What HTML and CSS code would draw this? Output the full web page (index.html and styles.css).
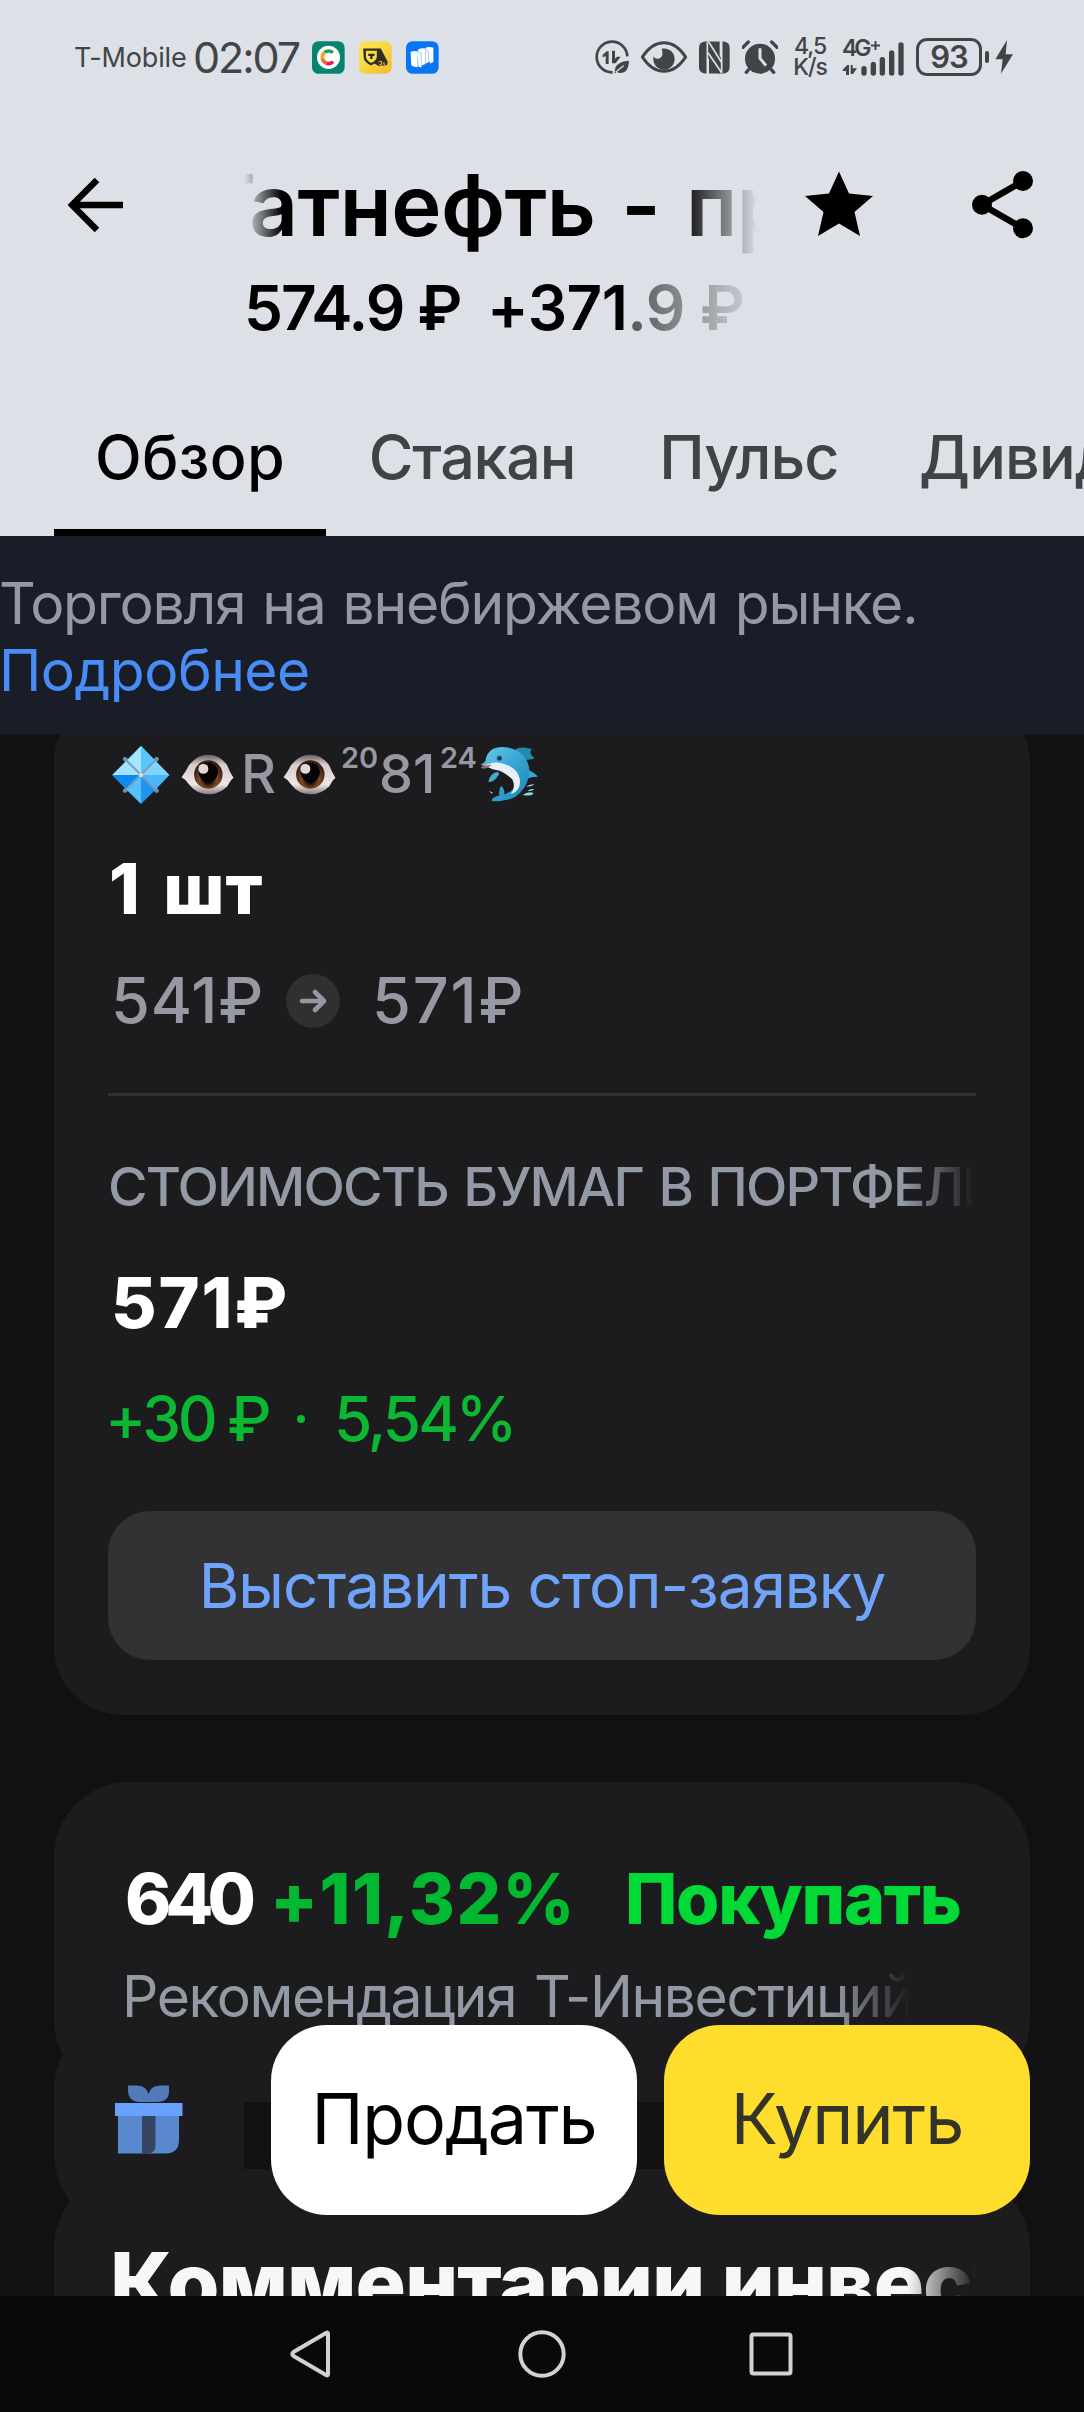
FILE: index.html
```
<!DOCTYPE html>
<html lang="ru">
<head>
<meta charset="utf-8">
<title>Татнефть - прив.</title>
<link rel="stylesheet" href="styles.css">
</head>
<body>
<header class="header">
  <div class="status">
    <span class="carrier">T-Mobile</span>
    <span class="clock">02:07</span>
    <svg class="app-icon" viewBox="36 30 100 99"><rect x="36" y="30" width="99" height="99" rx="20" fill="#078470"/><circle cx="86" cy="79" r="35" fill="#fff"/><g fill="none" stroke-width="11"><path d="M99 65A19 19 0 0 0 74 64" stroke="#1fa35c"/><path d="M74 64A19 19 0 0 0 68 83" stroke="#f0a52a"/><path d="M68 83A19 19 0 0 0 80 97" stroke="#e9742c"/><path d="M80 97A19 19 0 0 0 100 92" stroke="#d91e63"/></g></svg>
    <svg class="app-icon" viewBox="177 30 100 99"><defs><linearGradient id="gy" x1="0" x2="1" y1="0" y2="1"><stop offset=".3" stop-color="#fbe047"/><stop offset="1" stop-color="#f5b92c"/></linearGradient></defs><rect x="177" y="30" width="99" height="99" rx="20" fill="url(#gy)"/><path d="M190 52H243L264 92L262 102L238 106L224 98L214 104Q192 94 191 78Z" fill="#2f2d25"/><path d="M198 59H231V77Q230 89 214 96Q199 89 198 77Z" fill="#f7dc49"/><path d="M205 68H224V75H218V84H211V75H205Z" fill="#2f2d25"/><path d="M236 94Q242 88 246 92T239 102H248M253 94Q249 102 256 100" fill="none" stroke="#f6c637" stroke-width="3"/></svg>
    <svg class="app-icon" viewBox="319 30 100 99"><rect x="319" y="30" width="99" height="99" rx="20" fill="#0876f2"/><path d="M333 63Q342 58 355 61L354 109Q343 109 335 103ZM355 56Q365 50 377 52L378 99L366 104V110L356 107ZM378 50Q389 46 402 50V93L392 98L391 92L379 98Z" fill="#fff"/><path d="M355 61L365 66V104M377 53L386 59L388 93" fill="none" stroke="#a6cbfa" stroke-width="3"/></svg>
    <div class="status-right">
      <svg width="34" height="34" viewBox="45 28 102 102"><path d="M142 77A46 46 0 1 0 98 125" fill="none" stroke="#424548" stroke-width="8"/><path d="M86 100V62H80L68 72V80L77 76V100ZM96 60H105V84L111 78H122L107 98H96Z" fill="#424548"/><path d="M147 90Q110 92 105 115L104 129L110 123Q117 130 132 125Q146 118 147 90Z" fill="#424548"/><path d="M107 124L131 105" stroke="#dde0e7" stroke-width="4"/></svg>
      <svg class="eye-icon" width="46" height="32" viewBox="183 32 138 96"><path d="M187 80Q215 37 252 37T317 80Q289 123 252 123T187 80Z" fill="none" stroke="#424548" stroke-width="9"/><path d="M245 55A32 32 0 1 1 221 78Q226 89 239 84Q252 76 245 55Z" fill="#424548"/></svg>
      <svg class="nfc-icon" width="31" height="33" viewBox="357 31 93 98"><rect x="357" y="32" width="92" height="96" rx="18" fill="#424548"/><path d="M384 30V130M422 30V130" stroke="#dde0e7" stroke-width="6"/><path d="M381 32H390L425 84V128H416L381 76Z" fill="#424548"/><path d="M384 30L425 95M384 66L425 126" stroke="#dde0e7" stroke-width="5"/><path d="M382 34V128M425 32V126" stroke="#dde0e7" stroke-width="5"/></svg>
      <svg class="alarm-icon" width="36" height="34" viewBox="486 28 108 102"><circle cx="540" cy="84" r="45" fill="#424548"/><path d="M489 50L505 34M591 50L575 34" stroke="#424548" stroke-width="10" stroke-linecap="round"/><path d="M510 112L499 125M570 112L581 125" stroke="#424548" stroke-width="10" stroke-linecap="round"/><path d="M540 53V83L558 105" stroke="#dde0e7" stroke-width="9" fill="none"/></svg>
      <div class="speed"><span>4,5</span><span>K/s</span></div>
      <div class="signal">
        <div class="net">4G<svg class="plus" width="9" height="9" viewBox="0 0 9 9"><path d="M4.500 0V9M0 4.500H9" stroke="#424548" stroke-width="2"/></svg></div>
        <svg width="62" height="34" viewBox="66 25 186 102"><g stroke="#424548" stroke-width="16" stroke-linecap="round"><path d="M132 105V118M160 92V118M187 78V118M215 58V118M243 34V118"/></g><path d="M87 124V94H82L68 108V112H78V124ZM92 94H98V104H111L99 121H92Z" fill="#424548"/></svg>
      </div>
      <div class="battery">93</div>
      <span class="battery-tip"></span>
      <svg class="bolt" width="18" height="34" viewBox="526 26 54 102"><path d="M562 26L527 84H549L544 127L580 69H558Z" fill="#424548"/></svg>
    </div>
  </div>

  <div class="titlebar">
    <svg class="back" width="56" height="56" viewBox="68 177 56 56"><path d="M97 180L72 205L97 230M72 205H123" fill="none" stroke="#000" stroke-width="6.5"/></svg>
    <div class="heading">
      <h1 class="title"><span>Татнефть - прив.</span></h1>
      <div class="subtitle"><span>574.9 ₽</span><span>+371.9 ₽</span></div>
    </div>
    <svg class="star" width="68" height="66" viewBox="805 171 68 66"><path d="M839 171.500L849 193.500L873 196L854.500 212L860 236L839 223.500L818 236L823.500 212L805 196L829 193.500Z"/></svg>
    <svg class="share" width="62" height="68" viewBox="972 171 62 68"><path d="M1023 181L982 204.700L1023 228.500" fill="none" stroke="#000" stroke-width="6.500"/><circle cx="1023" cy="181" r="10"/><circle cx="982" cy="204.700" r="10"/><circle cx="1023" cy="228.300" r="10"/></svg>
  </div>

  <nav class="tabs">
    <a class="tab tab-overview active">Обзор</a>
    <a class="tab tab-book">Стакан</a>
    <a class="tab tab-pulse">Пульс</a>
    <a class="tab tab-div">Дивиденды</a>
  </nav>
</header>

<div class="notice"><p>Торговля на внебиржевом рынке.</p><a>Подробнее</a></div>

<main class="content">
  <section class="card position">
    <div class="account">
      <svg class="diamond" width="60" height="60" viewBox="33 30 180 180"><path d="M75 72L170 167M75 167L170 72" stroke="#708cb0" stroke-width="13" stroke-linecap="round"/><path d="M123 33L208 120L123 206L37 120Z" fill="#4ebcf8"/><path d="M123 33V120L80 77Z" fill="#a5e5fd"/><path d="M123 33V120L166 77Z" fill="#58c6fb"/><path d="M80 77L123 120H37Z" fill="#a3e3fd"/><path d="M166 77L123 120H208Z" fill="#7fd4fc"/><path d="M37 120H123L80 164Z" fill="#0c8bee"/><path d="M80 164L123 120V206Z" fill="#55c0fa"/><path d="M208 120H123L166 164Z" fill="#48b7fb"/><path d="M166 164L123 120V206Z" fill="#2095ef"/><path d="M77 74L168 165M77 165L168 74" stroke="#7e9bbf" stroke-width="6"/><circle cx="123" cy="120" r="7" fill="#c9d9ec"/></svg>
      <svg class="eye" width="55" height="43" viewBox="240 55 165 130"><defs><linearGradient id="ew" x1="0" x2="0" y1="0" y2="1"><stop offset="0" stop-color="#675b5c"/><stop offset=".25" stop-color="#d8cccd"/><stop offset=".75" stop-color="#eee5e7"/><stop offset="1" stop-color="#88797c"/></linearGradient><radialGradient id="ei" cx=".5" cy=".7" r=".55"><stop offset=".2" stop-color="#160c07"/><stop offset=".55" stop-color="#7f4927"/><stop offset="1" stop-color="#3c2114"/></radialGradient></defs><path d="M244 128Q258 110 266 93Q290 60 325 60Q360 60 382 92Q390 113 401 130Q390 139 382 156Q355 181 325 180Q288 178 267 150Q258 135 244 128Z" fill="url(#ew)"/><circle cx="325" cy="120" r="43" fill="url(#ei)"/><ellipse cx="325" cy="114" rx="29" ry="30" fill="#050303"/><circle cx="310" cy="103" r="15" fill="#ded9da"/></svg>
      <span class="letter">R</span>
      <svg class="eye" width="55" height="43" viewBox="240 55 165 130"><path d="M244 128Q258 110 266 93Q290 60 325 60Q360 60 382 92Q390 113 401 130Q390 139 382 156Q355 181 325 180Q288 178 267 150Q258 135 244 128Z" fill="url(#ew)"/><circle cx="325" cy="120" r="43" fill="url(#ei)"/><ellipse cx="325" cy="114" rx="29" ry="30" fill="#050303"/><circle cx="310" cy="103" r="15" fill="#ded9da"/></svg>
      <sup class="small-number twenty">20</sup><span class="letter number">81</span><sup class="small-number">24</sup>
      <svg class="dolphin" width="60" height="57" viewBox="1140 35 180 172"><defs><linearGradient id="db" x1="0" x2="1" y1="0" y2="1"><stop offset="0" stop-color="#6cc9ea"/><stop offset=".5" stop-color="#35a5d3"/><stop offset="1" stop-color="#1c86b6"/></linearGradient></defs><path d="M1243 50Q1264 32 1300 45Q1286 53 1307 73Q1286 79 1272 76Z" fill="#2389ae"/><path d="M1278 104Q1298 108 1318 128Q1303 126 1284 134Z" fill="#37a6d0"/><path d="M1144 91Q1153 88 1159 80Q1160 57 1182 43Q1210 32 1243 44Q1279 57 1290 96Q1296 143 1263 177Q1241 198 1218 198Q1195 205 1178 200Q1176 191 1201 184Q1198 163 1207 155Q1220 169 1215 181Q1246 171 1249 148Q1236 112 1209 108L1168 99Q1152 105 1146 99L1156 95Z" fill="url(#db)"/><path d="M1154 96Q1178 82 1205 86Q1247 96 1259 123Q1270 151 1253 170Q1246 178 1234 180Q1252 161 1240 135Q1225 121 1202 110Q1177 105 1168 99Z" fill="#e5f0f7"/><path d="M1144 98Q1162 93 1179 91L1165 101Q1151 106 1144 98Z" fill="#b65a68"/><path d="M1198 113Q1172 117 1168 143Q1184 146 1200 120Z" fill="#48aace"/><circle cx="1201" cy="72" r="8" fill="#1c6b91"/><circle cx="1202" cy="72" r="5" fill="#102435"/><path d="M1169 170L1182 176L1178 179ZM1281 158Q1294 148 1307 151Q1297 158 1281 158ZM1271 183Q1288 170 1304 177Q1301 188 1271 183ZM1286 170Q1295 163 1307 166Q1298 172 1286 170Z" fill="#8bd4ed"/></svg>
    </div>
    <div class="quantity">1 шт</div>
    <div class="prices">
      <span>541₽</span>
      <svg class="arrow" width="54" height="54" viewBox="286 972 54 54"><circle cx="313" cy="999" r="27" fill="#303031"/><path d="M302 999H324M315 990L324 999L315 1008" fill="none" stroke="#9699a3" stroke-width="4.600" stroke-linecap="round" stroke-linejoin="round"/></svg>
      <span class="new-price">571₽</span>
    </div>
    <hr class="divider">
    <div class="label">СТОИМОСТЬ БУМАГ В ПОРТФЕЛЕ</div>
    <div class="value">571₽</div>
    <div class="profit"><span class="profit-sum">+30 ₽</span><span class="dot"></span><span class="profit-pct">5,54%</span></div>
    <button class="stop-order">Выставить стоп-заявку</button>
  </section>

  <section class="card forecast">
    <div class="forecast-row"><span class="target">640</span><span class="upside">+11,32%</span><span class="verdict">Покупать</span></div>
    <div class="source">Рекомендация Т-Инвестиций</div>
  </section>

  <section class="card bonus">
    <svg class="gift" width="68" height="69" viewBox="115 2085 68 69"><path d="M128 2085.500H137Q147 2086 148.500 2094Q150 2086 160 2085.500H169V2091Q169 2102 157 2102H140Q128 2102 128 2090Z" fill="#5279b9"/><path d="M118 2115H179V2140Q179 2153.500 165 2153.500H118Z" fill="#5a88cf"/><path d="M142 2115H155.500V2146Q155.500 2152 149 2153.500H142Z" fill="#354561"/><path d="M115 2103H182.500V2116H115Z" fill="#68a1fe"/></svg>
    <div class="placeholder"></div>
  </section>

  <section class="card comments"><h2>Комментарии инвесторов</h2></section>

  <div class="actions"><button class="sell">Продать</button><button class="buy">Купить</button></div>
</main>

<footer class="system-nav">
  <svg class="nav-back" width="44" height="50" viewBox="0 0 44 50"><path d="M39 4.500V45.500Q39 47 37 46L4.500 27Q2 25 4.500 23L37 4Q39 3 39 4.500Z"/></svg>
  <svg class="nav-home" width="50" height="50" viewBox="0 0 50 50"><circle cx="25" cy="25" r="21.700"/></svg>
  <svg class="nav-recent" width="44" height="44" viewBox="0 0 44 44"><rect x="2.500" y="2.500" width="39" height="39" rx="2"/></svg>
</footer>
</body>
</html>
```
FILE: styles.css
```
* { box-sizing: border-box; margin: 0; padding: 0; }
body {
  width: 1084px; height: 2412px; overflow: hidden;
  display: flex; flex-direction: column;
  background: #111; color: #fff;
  font-family: Inter, "Noto Sans", sans-serif;
  white-space: nowrap;
}
svg { display: block; flex: none; }
button { border: 0; font: inherit; }

/* header */
.header { height: 536px; background: #dde0e7; color: #000; overflow: hidden; flex: none; }
.status { height: 114px; padding-left: 74px; display: flex; align-items: center; color: #424548; }
.carrier { width: 119px; font-size: 27px; letter-spacing: -.15px; }
.clock { width: 119px; font-size: 43px; line-height: 43px; letter-spacing: -2.1px; }
.app-icon { width: 33px; height: 33px; margin-right: 14px; }
.status-right { display: flex; align-items: center; margin-left: 142px; }
.eye-icon { margin-left: 12px; }
.nfc-icon { margin-left: 12px; }
.alarm-icon { margin-left: 12px; }
.speed { width: 64px; display: flex; flex-direction: column; align-items: center; font-size: 23px; line-height: 21px; letter-spacing: -1px; font-weight: 500; }
.signal { width: 62px; height: 38px; position: relative; display: flex; align-items: flex-end; }
.net { position: absolute; left: 0; top: 0; display: flex; font-size: 23px; line-height: 20px; font-weight: 600; letter-spacing: -3px; }
.plus { margin: 3px 0 0 2px; }
.battery {
  width: 66px; height: 38px; margin-left: 12px; border: 3px solid #424548; border-radius: 11px;
  text-align: center; font-size: 31px; line-height: 32px; font-weight: 600; letter-spacing: -1px;
}
.battery-tip { width: 4px; height: 12px; border-radius: 2px; background: #424548; margin-left: 3px; }
.bolt { margin-left: 6px; }

.titlebar { height: 222px; padding-left: 68px; display: flex; align-items: flex-start; }
.back { margin-top: 63px; }
.heading { width: 516px; margin: 41px 0 0 120px; }
.title {
  width: 516px; overflow: hidden; font-size: 85px; line-height: 102px; font-weight: 600; letter-spacing: -.6px; word-spacing: 5px;
  -webkit-mask-image: linear-gradient(90deg, transparent 0, #000 38px, #000 436px, transparent 514px);
  mask-image: linear-gradient(90deg, transparent 0, #000 38px, #000 436px, transparent 514px);
}
.title span { display: inline-block; margin-left: -44px; }
.subtitle {
  height: 55px; margin-top: 20px; overflow: hidden; display: flex; font-size: 62px; line-height: 62px; font-weight: 600;
  -webkit-mask-image: linear-gradient(90deg, #000 382px, rgba(0,0,0,.62) 384px, rgba(0,0,0,.1) 500px);
  mask-image: linear-gradient(90deg, #000 382px, rgba(0,0,0,.62) 384px, rgba(0,0,0,.1) 500px);
}
.subtitle span:first-child { width: 243px; letter-spacing: -1.900px; }
.subtitle span:last-child { letter-spacing: -.6px; }
.star { margin: 57px 0 0 45px; }
.share { margin: 57px 0 0 99px; }

.tabs { height: 200px; padding-left: 54px; display: flex; font-size: 61px; line-height: 61px; font-weight: 550; color: #404346; }
.tab { flex: none; padding-top: 91px; text-align: center; }
.tab-overview { width: 272px; letter-spacing: .3px; }
.tab-book { width: 292px; letter-spacing: -1.2px; }
.tab-pulse { width: 262px; letter-spacing: -.9px; }
.tab-div { padding-left: 39px; letter-spacing: -.8px; }
.active { color: #000; border-bottom: 7px solid #000; }

/* notice */
.notice { height: 198px; flex: none; padding-top: 34px; background: #191d28; color: #9399a5; font-size: 57px; line-height: 67px; font-weight: 430; letter-spacing: -1.2px; word-spacing: 2px; text-indent: -1px; }
.notice a { display: block; color: #488cf5; letter-spacing: -.5px; }

/* content */
.content { position: relative; height: 1562px; flex: none; padding: 0 54px; overflow: hidden; }
.card { background: #1c1c1e; border-radius: 75px; }
.position { height: 1021px; margin-top: -40px; padding: 50px 54px 54px 54px; border-radius: 68px; }
.account { height: 60px; display: flex; align-items: flex-start; color: #9699a3; }
.diamond { margin: 1px 9px 0 3px; }
.eye { margin-top: 9px; }
.letter { font-size: 54px; line-height: 60px; font-weight: 500; width: 47px; padding-left: 6px; }
.small-number { width: 38px; font-size: 29px; line-height: 27px; font-weight: 600; }
.twenty { margin-left: 4px; }
.number { width: 61px; padding-left: 0; }
.dolphin { margin: 2px 0 0 1px; }
.quantity { margin-top: 50px; padding-left: 1px; font-size: 70px; line-height: 70px; font-weight: 800; letter-spacing: 1px; word-spacing: 6px; }
.prices { margin-top: 45px; display: flex; align-items: center; padding-left: 3px; font-size: 63px; line-height: 63px; color: #9699a3; font-weight: 450; letter-spacing: .8px; }
.prices span { width: 175px; }
.prices .new-price { margin-left: 32px; letter-spacing: 1.800px; }
.divider { height: 3px; margin-top: 61px; border: 0; background: #303032; }
.label {
  margin-top: 64px; overflow: hidden; font-size: 54px; line-height: 54px; font-weight: 500; letter-spacing: -1.850px; word-spacing: 3px; color: #9399a5;
  -webkit-mask-image: linear-gradient(90deg, #000 795px, transparent 866px);
  mask-image: linear-gradient(90deg, #000 795px, transparent 866px);
}
.value { margin-top: 54px; padding-left: 3px; font-size: 70px; line-height: 70px; font-weight: 800; letter-spacing: 1.800px; }
.profit { margin-top: 50px; display: flex; align-items: center; font-size: 62px; line-height: 62px; font-weight: 450; color: #0bb733; }
.profit-sum { width: 190px; letter-spacing: -3.500px; margin-left: -3px; }
.dot { width: 8px; height: 8px; border-radius: 50%; background: currentColor; margin: 0 29px 0 2px; }
.profit-pct { letter-spacing: -3px; }
.stop-order { display: block; width: 868px; height: 149px; margin-top: 61px; border-radius: 42px; background: #323234; color: #70a4fa; font-size: 62px; font-weight: 430; letter-spacing: -1px; }

.forecast { height: 313px; margin-top: 67px; padding: 82px 0 0 66px; }
.forecast-row { display: flex; font-size: 70px; line-height: 70px; font-weight: 800; padding-left: 5px; }
.target { width: 145px; letter-spacing: -6px; }
.upside { width: 355px; color: #03b831; letter-spacing: 1.500px; }
.verdict { color: #00d936; letter-spacing: -1.3px; }
.source {
  width: 788px; margin: 32px 0 0 2px; overflow: hidden; font-size: 57px; line-height: 62px; font-weight: 430; letter-spacing: -1.400px; word-spacing: 3px; color: #9399a5;
  -webkit-mask-image: linear-gradient(90deg, #000 713px, transparent 788px);
  mask-image: linear-gradient(90deg, #000 713px, transparent 788px);
}
.bonus { height: 214px; margin-top: -80px; padding: 70px 0 0 61px; display: flex; }
.placeholder { width: 560px; height: 67px; margin: 17px 0 0 61px; background: #111; }
.comments { height: 300px; margin-top: -56px; padding: 68px 54px 0; }
.comments h2 {
  padding-left: 2px; overflow: hidden; font-size: 84px; line-height: 84px; font-weight: 800; letter-spacing: -1.100px; color: #f6f7f9;
  -webkit-mask-image: linear-gradient(90deg, #000 800px, transparent 868px);
  mask-image: linear-gradient(90deg, #000 800px, transparent 868px);
}

/* floating trade buttons over the cards */
.actions { position: absolute; left: 271px; top: 1291px; display: flex; gap: 27px; }
.actions button { width: 366px; height: 190px; padding-bottom: 3px; border-radius: 56px; font-size: 70px; font-weight: 430; letter-spacing: -1.1px; }
.sell { background: #fff; color: #000; }
.buy { background: #ffdd2d; color: #333327; }

/* system navigation */
.system-nav { height: 116px; flex: none; display: flex; align-items: center; padding-left: 289px; background: #090909; }
.system-nav svg { fill: none; stroke: #d2d2d2; stroke-width: 4; stroke-linejoin: round; }
.nav-home { margin-left: 184px; }
.nav-recent { margin-left: 182px; }
```
